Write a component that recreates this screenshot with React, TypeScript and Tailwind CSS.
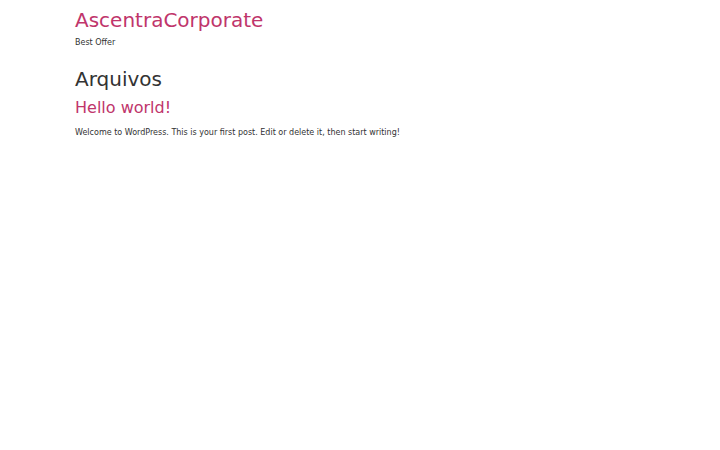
export default function App() {
  return (
    <div className="min-h-[450px] bg-white text-[#333] font-['DejaVu_Sans',sans-serif]">
      <div className="px-[75px]">
        <header className="pt-[7px]">
          <h1 className="text-[20px] leading-[26px] text-[#c0356b]">AscentraCorporate</h1>
          <p className="mt-[3px] text-[8px] leading-[14px]">Best Offer</p>
        </header>
        <main className="mt-[15px]">
          <h2 className="text-[20px] leading-[28px]">Arquivos</h2>
          <article className="mt-[3px]">
            <h3 className="text-[16px] leading-[24px] text-[#c0356b]">Hello world!</h3>
            <p className="mt-[6px] text-[8px] leading-[14px]">
              Welcome to WordPress. This is your first post. Edit or delete it, then start writing!
            </p>
          </article>
        </main>
      </div>
    </div>
  );
}
